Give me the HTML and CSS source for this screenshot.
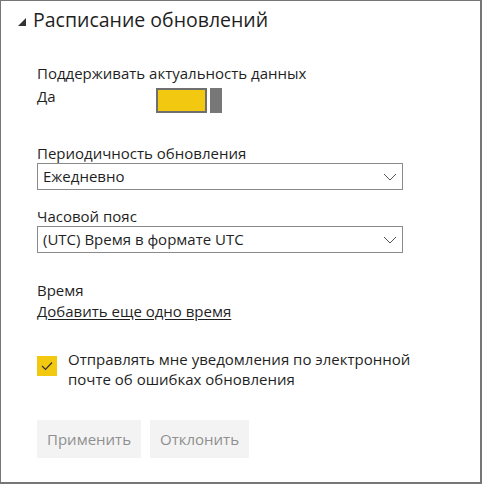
FILE: index.html
```html
<!DOCTYPE html>
<html lang="ru">
<head>
<meta charset="utf-8">
<link rel="stylesheet" href="styles.css">
</head>
<body>
<div class="panel">
  <h2 class="title">
    <svg class="tri" width="8" height="8" viewBox="0 0 8 8"><polygon points="8,0 8,8 0,8" fill="#333"/></svg>
    <span>Расписание обновлений</span>
  </h2>
  <div class="content">
    <div class="label l1">Поддерживать актуальность данных</div>
    <div class="toggle-row">
      <span class="yes">Да</span>
      <span class="toggle"><span class="track"></span><span class="thumb"></span></span>
    </div>

    <div class="label l2">Периодичность обновления</div>
    <div class="select">
      <span>Ежедневно</span>
      <svg class="chev" width="14" height="8" viewBox="0 0 14 8"><polyline points="1,1 7,7 13,1" fill="none" stroke="#555" stroke-width="1"/></svg>
    </div>

    <div class="label l3">Часовой пояс</div>
    <div class="select">
      <span>(UTC) Время в формате UTC</span>
      <svg class="chev" width="14" height="8" viewBox="0 0 14 8"><polyline points="1,1 7,7 13,1" fill="none" stroke="#555" stroke-width="1"/></svg>
    </div>

    <div class="label l4">Время</div>
    <a class="link">Добавить еще одно время</a>

    <div class="check-row">
      <span class="checkbox">
        <svg width="12" height="10" viewBox="0 0 12 10"><polyline points="1,5 4.5,8.5 11,1.5" fill="none" stroke="#333" stroke-width="1.2"/></svg>
      </span>
      <span class="check-text">Отправлять мне уведомления по электронной почте об ошибках обновления</span>
    </div>

    <div class="buttons">
      <button class="btn">Применить</button>
      <button class="btn">Отклонить</button>
    </div>
  </div>
</div>
</body>
</html>
```

FILE: styles.css
```css
* { box-sizing: border-box; }
html, body { margin: 0; padding: 0; background: #fff; }
body {
  font-family: "Open Sans", "Noto Sans", sans-serif;
  color: #1f1f1f;
  font-size: 15px;
  line-height: 20px;
}
.panel {
  width: 482px;
  height: 484px;
  border-style: solid;
  border-color: #767676;
  border-width: 1px 2px 2px 1px;
}
.title {
  margin: 5px 0 0 17px;
  display: flex;
  align-items: center;
  gap: 7px;
  font-size: 19.5px;
  font-weight: normal;
  line-height: 28px;
  height: 28px;
}
.tri { margin-top: 3px; }
.content {
  padding-left: 36px;
  padding-right: 20px;
}
.label { line-height: 20px; }
.l1 { margin-top: 29px; }
.toggle-row {
  display: flex;
  align-items: flex-start;
  margin-top: 3px;
}
.yes { width: 119px; line-height: 20px; }
.toggle {
  display: flex;
  gap: 3px;
  margin-top: 2px;
}
.track {
  width: 51px;
  height: 25px;
  border: 2px solid #6f6f6f;
  background: #f2c811;
}
.thumb {
  width: 12px;
  height: 25px;
  background: #777;
}
.l2 { margin-top: 30px; }
.select {
  display: flex;
  align-items: center;
  justify-content: space-between;
  width: 366px;
  height: 27px;
  border: 1px solid #8a8a8a;
  padding: 0 5px 1px 5px;
}
.chev { margin-top: 1px; }
.l3 { margin-top: 16px; }
.l4 { margin-top: 27px; }
.link {
  display: inline-block;
  margin-top: 1px;
  color: #1f1f1f;
  text-decoration: underline;
  text-underline-offset: 2px;
}
.check-row {
  display: flex;
  align-items: flex-start;
  gap: 11px;
  margin-top: 28px;
}
.checkbox {
  flex: none;
  width: 20px;
  height: 20px;
  margin-top: 7px;
  background: #f2c811;
  display: flex;
  align-items: center;
  justify-content: center;
}
.check-text { max-width: 385px; }
.buttons {
  display: flex;
  gap: 9px;
  margin-top: 31px;
}
.btn {
  font: inherit;
  height: 38px;
  padding: 0 10px;
  border: none;
  background: #f3f3f3;
  color: #8f8f8f;
}
```
